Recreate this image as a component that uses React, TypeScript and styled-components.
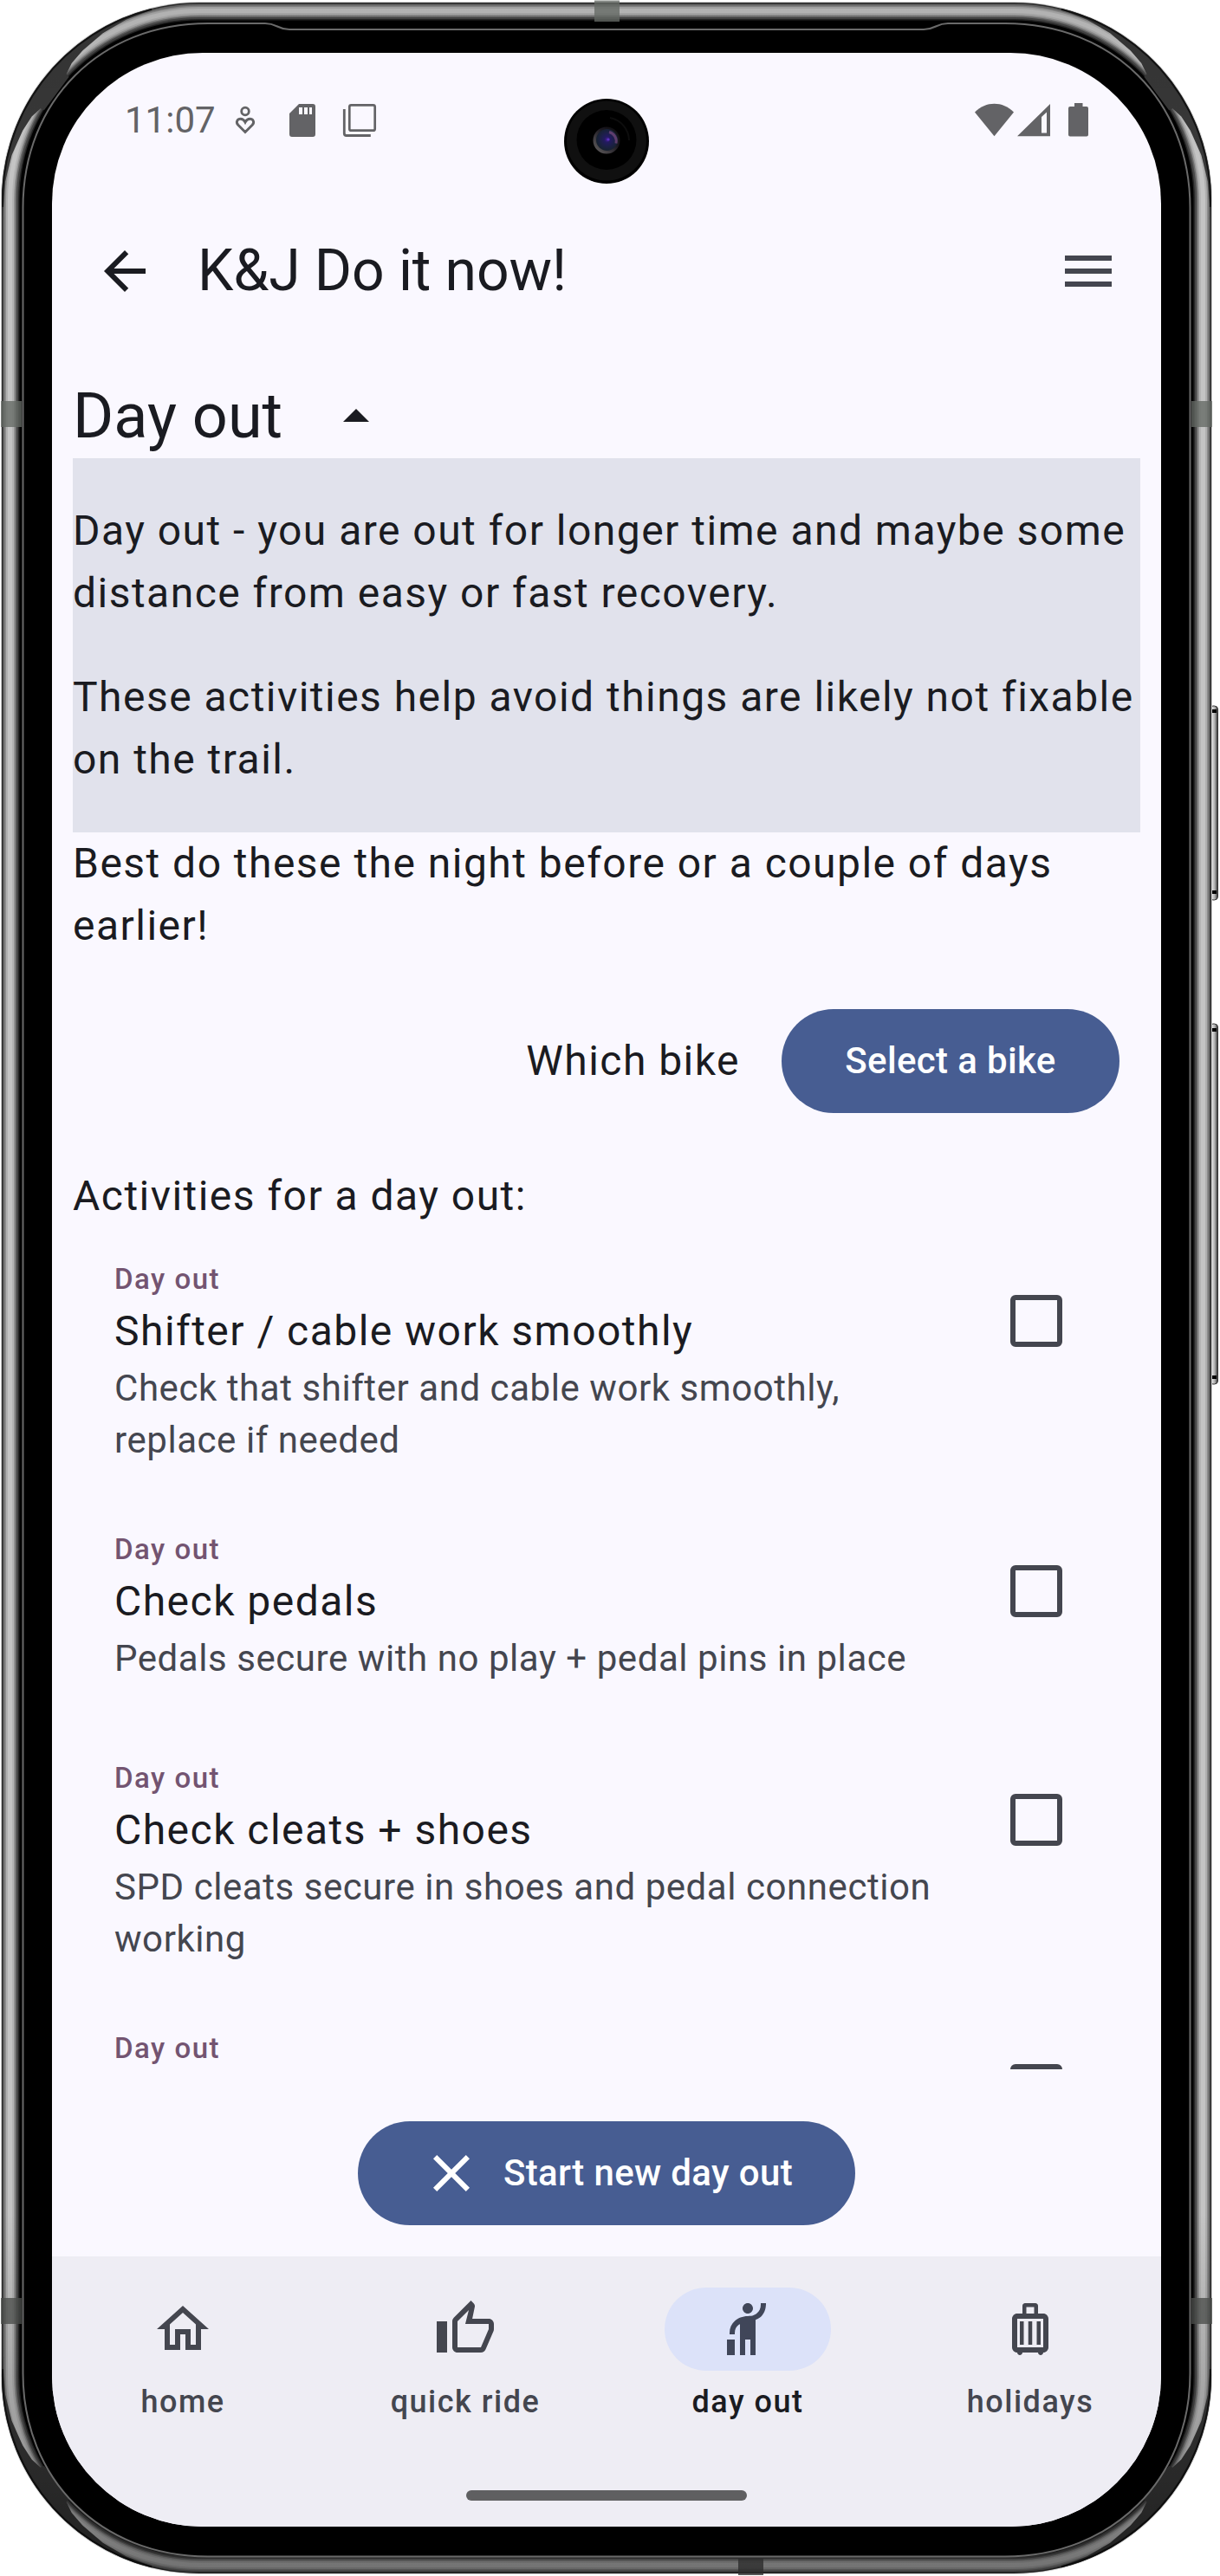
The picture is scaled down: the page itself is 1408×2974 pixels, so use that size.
import React from 'react';
import styled, { createGlobalStyle } from 'styled-components';
import { MdHail, MdOutlineLuggage } from 'react-icons/md';

const color = {
  surface: '#faf8ff',
  container: '#eeedf4',
  variant: '#e1e2ec',
  primary: '#475d92',
  onSurface: '#1a1b21',
  onVariant: '#44464f',
  tertiary: '#735471',
  indicator: '#dce2f9',
  status: '#636366',
};

const GlobalStyle = createGlobalStyle`
  html, body { margin: 0; background: #fff; }
  *, *::before, *::after { box-sizing: border-box; }
  body { font-family: Roboto, "Liberation Sans", sans-serif; color: ${color.onSurface}; }
  p, h1, h2, h3 { margin: 0; font-weight: 400; }
  button { font: inherit; border: 0; background: none; padding: 0; }
`;

const Phone = styled.div`
  position: relative;
  width: 1408px;
  height: 2974px;
  padding: 61px 68px 57px 60px;
  overflow: hidden;
`;

const FrameArt = styled.svg`
  position: absolute;
  inset: 0;
`;

const Camera = styled.svg`
  position: absolute;
  left: 651px;
  top: 114px;
`;

const Screen = styled.main`
  position: relative;
  display: flex;
  flex-direction: column;
  height: 2856px;
  border-radius: 174px;
  overflow: hidden;
  background: ${color.surface};
`;

const StatusBar = styled.header`
  display: flex;
  justify-content: space-between;
  align-items: center;
  flex: none;
  height: 156px;
  padding: 0 84px;
`;

const Clock = styled.span`
  font-size: 42px;
  line-height: 48px;
  color: ${color.status};
`;

const StatusGroup = styled.div`
  display: flex;
  align-items: center;
  color: ${color.status};
  svg { display: block; }
`;

const ClockGroup = styled(StatusGroup)`
  gap: 17px;
`;

const StatusEnd = styled(StatusGroup)`
  margin-right: -4px;
`;

const AppBar = styled.div`
  display: flex;
  align-items: center;
  flex: none;
  height: 192px;
  padding: 0 12px;
`;

const IconButton = styled.button<{ $color: string }>`
  display: grid;
  place-items: center;
  width: 144px;
  height: 144px;
  color: ${(p) => p.$color};
`;

const Title = styled.h1`
  flex: 1;
  padding-left: 12px;
  font-size: 66px;
  line-height: 84px;
  letter-spacing: -0.1px;
`;

const Content = styled.section`
  display: flex;
  flex-direction: column;
  flex: none;
  height: 2196px;
  padding: 24px;
`;

const SectionHead = styled.div`
  display: flex;
  align-items: center;
  gap: 49px;
  height: 96px;
`;

const SectionTitle = styled.h2`
  font-size: 72px;
  line-height: 96px;
`;

const Body = styled.p`
  font-size: 48px;
  line-height: 72px;
  letter-spacing: 1.47px;
`;

const InfoBox = styled.div`
  display: flex;
  flex-direction: column;
  gap: 48px;
  padding: 48px 0;
  background: ${color.variant};
  white-space: nowrap;
`;

const BikeRow = styled.div`
  display: flex;
  align-items: center;
  justify-content: flex-end;
  gap: 48px;
  height: 144px;
  margin: 48px 0;
  padding-right: 24px;
`;

const Pill = styled.button<{ $width: number }>`
  display: flex;
  align-items: center;
  justify-content: center;
  gap: 24px;
  width: ${(p) => p.$width}px;
  height: 120px;
  border-radius: 60px;
  background: ${color.primary};
  color: #fff;
  font-size: 42px;
  font-weight: 500;
  line-height: 60px;
  letter-spacing: 0.35px;
  white-space: nowrap;
`;

const List = styled.ul`
  flex: none;
  height: 972px;
  margin: 0;
  padding: 0;
  overflow: hidden;
  list-style: none;
`;

const Item = styled.li`
  display: flex;
  align-items: flex-start;
  gap: 42px;
  min-height: 264px;
  padding: 36px 48px;
`;

const ItemText = styled.div`
  flex: 1;
`;

const Overline = styled.p`
  font-size: 33px;
  font-weight: 500;
  line-height: 48px;
  letter-spacing: 1.5px;
  color: ${color.tertiary};
`;

const Support = styled.p`
  font-size: 42px;
  line-height: 60px;
  letter-spacing: 0.56px;
  color: ${color.onVariant};
`;

const CheckArea = styled.div`
  display: grid;
  place-items: center;
  width: 144px;
  height: 144px;
`;

const Check = styled.span`
  width: 60px;
  height: 60px;
  border: 6px solid ${color.onVariant};
  border-radius: 6px;
`;

const ActionRow = styled.div`
  display: flex;
  justify-content: center;
  align-items: center;
  height: 144px;
  margin-top: 48px;
`;

const NavBar = styled.nav`
  display: flex;
  flex-direction: column;
  align-items: center;
  flex: 1;
  background: ${color.container};
`;

const NavItems = styled.div`
  display: flex;
  gap: 24px;
  width: 100%;
  height: 240px;
  padding-top: 36px;
`;

const NavItem = styled.div<{ $active?: boolean }>`
  display: flex;
  flex: 1;
  flex-direction: column;
  align-items: center;
  gap: 12px;
  color: ${(p) => (p.$active ? color.onSurface : color.onVariant)};
  font-size: 36px;
  font-weight: 500;
  line-height: 48px;
  letter-spacing: 1.5px;
`;

const Indicator = styled.div<{ $active?: boolean }>`
  display: grid;
  place-items: center;
  width: 192px;
  height: 96px;
  border-radius: 48px;
  background: ${(p) => (p.$active ? color.indicator : 'transparent')};
  color: ${(p) => (p.$active ? '#404659' : color.onVariant)};
`;

const Handle = styled.div`
  width: 324px;
  height: 12px;
  margin-top: 30px;
  border-radius: 6px;
  background: #5f5f61;
`;

const Icon = ({ d }: { d: string }) => (
  <svg width="72" height="72" viewBox="0 0 24 24" fill="currentColor">
    <path d={d} />
  </svg>
);

const paths = {
  back: 'M20 11H7.83l5.59-5.59L12 4l-8 8 8 8 1.41-1.41L7.83 13H20v-2z',
  menu: 'M3 18h18v-2H3v2zm0-5h18v-2H3v2zm0-7v2h18V6H3z',
  dropUp: 'M7 14l5-5 5 5z',
  close: 'M19 6.41L17.59 5 12 10.59 6.41 5 5 6.41 10.59 12 5 17.59 6.41 19 12 13.41 17.59 19 19 17.59 13.41 12z',
  home: 'M12 5.69l5 4.5V18h-2v-6H9v6H7v-7.81l5-4.5M12 3L2 12h3v8h6v-6h2v6h6v-8h3L12 3z',
  thumb:
    'M9 21h9c.83 0 1.54-.5 1.84-1.22l3.02-7.05c.09-.23.14-.47.14-.73v-2c0-1.1-.9-2-2-2h-6.31l.95-4.57.03-.32c0-.41-.17-.79-.44-1.06L14.17 1 7.58 7.59C7.22 7.95 7 8.45 7 9v10c0 1.1.9 2 2 2zM9 9l4.34-4.34L12 10h9v2l-3 7H9V9zM1 9h4v12H1z',
};

const activities = [
  { title: 'Shifter / cable work smoothly', text: 'Check that shifter and cable work smoothly, replace if needed' },
  { title: 'Check pedals', text: 'Pedals secure with no play + pedal pins in place' },
  { title: 'Check cleats + shoes', text: 'SPD cleats secure in shoes and pedal connection working' },
  { title: '', text: '' },
];

/* Metal rim, from the outer edge inwards: [inset, shade]. */
const rim: [number, string][] = [
  [0, '#2b2b2b'],
  [1.5, '#6c6c6c'],
  [3.5, '#8f8f8f'],
  [5, '#b0b0b0'],
  [7, '#c4c4c4'],
  [12, '#b4b4b4'],
  [14, '#969696'],
  [15.5, '#6c6c6c'],
  [17, '#484848'],
  [19, '#262626'],
  [20.5, '#000'],
];

/* A point on the top-left corner, at radius r and angle a (degrees, from straight up). */
const polar = (r: number, a: number) => {
  const t = (a * Math.PI) / 180;
  return `${(230 - r * Math.sin(t)).toFixed(1)} ${(231 - r * Math.cos(t)).toFixed(1)}`;
};

/* Inner limit of the corner's shadow: the highlights taper to a point at 46.5 and 60 degrees. */
const half: [number, number][] = [
  [226.5, 14],
  [225, 22],
  [222.5, 30],
  [219, 38],
  [216, 43],
  [211.5, 46.5],
  [207, 46.6],
];
const shadowEdge = [...half, ...half.map(([r, a]): [number, number] => [r, 106.5 - a]).reverse()];
const cornerShade =
  `M${polar(227, 10)} A227 227 0 0 0 ${polar(227, 96)} L` +
  [...shadowEdge].reverse().map(([r, a]) => polar(r, a)).join(' L') +
  ' Z';

const Corner = ({ transform }: { transform?: string }) => (
  <g transform={transform} fill="none">
    <path d={cornerShade} fill="#383838" />
    <path d={`M${polar(227, 14)} A227 227 0 0 0 ${polar(227, 92)}`} stroke="#141414" strokeWidth="2" />
  </g>
);

const Frame = () => (
  <FrameArt width="1408" height="2974" viewBox="0 0 1408 2974">
    <defs>
      <linearGradient id="fall" x1="0" y1="0" x2="0" y2="1">
        <stop offset="0" stopColor="#000" stopOpacity="0.1" />
        <stop offset="0.06" stopColor="#000" stopOpacity="0" />
        <stop offset="0.86" stopColor="#000" stopOpacity="0" />
        <stop offset="0.94" stopColor="#000" stopOpacity="0.18" />
        <stop offset="1" stopColor="#000" stopOpacity="0.42" />
      </linearGradient>
      <linearGradient id="key" x1="0" y1="0" x2="1" y2="0">
        <stop offset="0" stopColor="#555" />
        <stop offset="0.35" stopColor="#d8d8d8" />
        <stop offset="0.65" stopColor="#aaa" />
        <stop offset="1" stopColor="#2a2a2a" />
      </linearGradient>
    </defs>
    <rect x="1396" y="815" width="9.5" height="224" rx="4" fill="url(#key)" stroke="#333" strokeWidth="1" />
    <rect x="1396" y="1182" width="9.5" height="416" rx="4" fill="url(#key)" stroke="#333" strokeWidth="1" />
    <path d="M1399 821h5M1399 1030h5M1399 1189h5M1399 1590h5" stroke="#000" strokeWidth="4" />
    <rect x="1" y="2" width="1398" height="2970" rx="229" fill="#ccc" />
    {rim.map(([d, fill]) => (
      <rect key={d} x={2 + d} y={3 + d} width={1396 - 2 * d} height={2968 - 2 * d} rx={228 - d} fill={fill} />
    ))}
    <Corner />
    <Corner transform="translate(1400 0) scale(-1 1)" />
    <Corner transform="translate(0 2974) scale(1 -1)" />
    <Corner transform="translate(1400 2974) scale(-1 -1)" />
    <rect x="2" y="3" width="1396" height="2968" rx="228" fill="url(#fall)" />
    <g fill="#646964" opacity="0.78">
      <rect x="686" y="0.500" width="29" height="24.500" />
      <rect x="1" y="463" width="24" height="30" />
      <rect x="1375" y="463" width="24" height="30" />
      <rect x="1" y="2653" width="24" height="30" fill="#4a4d4a" />
      <rect x="1375" y="2653" width="24" height="30" fill="#4a4d4a" />
      <rect x="852" y="2953" width="29" height="20" fill="#2c2c2c" />
    </g>
    <path
      d="M26.5 240 C26.5 116 116 27 240 27 H306 C320 27 320 34 334 34 H1066 C1080 34 1080 27 1094 27 H1160 C1284 27 1373.5 116 1373.5 240 V2740 C1373.5 2862 1284 2951.5 1160 2951.5 H240 C116 2951.5 26.5 2862 26.5 2740 Z"
      fill="#000"
      stroke="#6a6a6a"
      strokeWidth="2"
    />
  </FrameArt>
);

const Lens = () => (
  <Camera width="98" height="98" viewBox="0 0 98 98">
    <defs>
      <radialGradient id="glass" cx="0.52" cy="0.48" r="0.55">
        <stop offset="0" stopColor="#4a1f96" />
        <stop offset="0.25" stopColor="#221a60" />
        <stop offset="0.6" stopColor="#1c2046" />
        <stop offset="1" stopColor="#15222c" />
      </radialGradient>
      <linearGradient id="lensRing" x1="0" y1="1" x2="1" y2="0">
        <stop offset="0" stopColor="#6a6666" />
        <stop offset="0.6" stopColor="#1b1820" />
        <stop offset="1" stopColor="#0a0a0a" />
      </linearGradient>
    </defs>
    <circle cx="49" cy="49" r="49" fill="#000" />
    <circle cx="49" cy="48.500" r="46" fill="#101010" />
    <circle cx="49" cy="47.500" r="34.500" fill="#000" />
    <path d="M53 22a27 27 0 0 1 22 26" stroke="#0d0d0d" strokeWidth="2" fill="none" />
    <circle cx="49" cy="48" r="15.500" fill="url(#lensRing)" />
    <circle cx="49.500" cy="47.500" r="12.500" fill="url(#glass)" />
    <path d="M52 38.500a11 11 0 0 1 8 13" stroke="#7a4a80" strokeWidth="3" fill="none" opacity="0.7" />
    <circle cx="51" cy="47" r="1.600" fill="#5a32c0" />
  </Camera>
);

const StatusLeftIcons = () => (
  <svg width="170" height="48" viewBox="266 115 170 48" fill="none" stroke="currentColor">
    <circle cx="283" cy="128.500" r="4.300" strokeWidth="2.800" />
    <path
      d="M283 152.500L274.800 144.300C271.500 140.500 274.500 137.200 277.500 137.200C280.300 137.200 282 139 283 141C284 139 285.700 137.200 288.500 137.200C291.500 137.200 294.500 140.500 291.200 144.300Z"
      strokeWidth="2.900"
    />
    <path
      d="M345 120h16a3 3 0 0 1 3 3v32a3 3 0 0 1-3 3h-24a3 3 0 0 1-3-3v-24zM345 124v8h4v-8zM351 124v8h4v-8zM357 124v8h3v-8z"
      fill="currentColor"
      fillRule="evenodd"
      stroke="none"
    />
    <rect x="403.300" y="121.300" width="29.400" height="29.400" rx="2" strokeWidth="2.700" />
    <path d="M397.300 126v28a2.500 2.500 0 0 0 2.500 2.500h28" strokeWidth="2.800" />
  </svg>
);

const StatusRightIcons = () => (
  <svg width="140" height="48" viewBox="1120 115 140 48" fill="currentColor">
    <path d="M1125 129.500C1138 116.500 1157 116.500 1170 129.500L1147.500 157.200Z" />
    <path d="M1174 157.200L1212 120V157.200ZM1202 135V153.500H1208V129.500Z" fillRule="evenodd" />
    <path d="M1240 119h9.500v4h4.500a2 2 0 0 1 2 2v30.500a2 2 0 0 1-2 2h-19a2 2 0 0 1-2-2V125a2 2 0 0 1 2-2h5z" />
  </svg>
);

export default function App() {
  return (
    <>
      <GlobalStyle />
      <Phone>
        <Frame />
        <Screen>
          <StatusBar>
            <ClockGroup>
              <Clock>11:07</Clock>
              <StatusLeftIcons />
            </ClockGroup>
            <StatusEnd>
              <StatusRightIcons />
            </StatusEnd>
          </StatusBar>
          <AppBar>
            <IconButton $color={color.onSurface} aria-label="Back">
              <Icon d={paths.back} />
            </IconButton>
            <Title>K&amp;J Do it now!</Title>
            <IconButton $color={color.onVariant} aria-label="Menu">
              <Icon d={paths.menu} />
            </IconButton>
          </AppBar>
          <Content>
            <SectionHead>
              <SectionTitle>Day out</SectionTitle>
              <Icon d={paths.dropUp} />
            </SectionHead>
            <InfoBox>
              <Body>
                Day out - you are out for longer time and maybe some
                <br />
                distance from easy or fast recovery.
              </Body>
              <Body>
                These activities help avoid things are likely not fixable
                <br />
                on the trail.
              </Body>
            </InfoBox>
            <Body>
              Best do these the night before or a couple of days
              <br />
              earlier!
            </Body>
            <BikeRow>
              <Body>Which bike</Body>
              <Pill $width={390}>Select a bike</Pill>
            </BikeRow>
            <Body>Activities for a day out:</Body>
            <List>
              {activities.map((a, i) => (
                <Item key={i}>
                  <ItemText>
                    <Overline>Day out</Overline>
                    <Body>{a.title}</Body>
                    <Support>{a.text}</Support>
                  </ItemText>
                  <CheckArea>
                    <Check />
                  </CheckArea>
                </Item>
              ))}
            </List>
            <ActionRow>
              <Pill $width={574}>
                <Icon d={paths.close} />
                Start new day out
              </Pill>
            </ActionRow>
          </Content>
          <NavBar>
            <NavItems>
              <NavItem>
                <Indicator>
                  <Icon d={paths.home} />
                </Indicator>
                home
              </NavItem>
              <NavItem>
                <Indicator>
                  <Icon d={paths.thumb} />
                </Indicator>
                quick ride
              </NavItem>
              <NavItem $active>
                <Indicator $active>
                  <MdHail size={72} />
                </Indicator>
                day out
              </NavItem>
              <NavItem>
                <Indicator>
                  <MdOutlineLuggage size={72} />
                </Indicator>
                holidays
              </NavItem>
            </NavItems>
            <Handle />
          </NavBar>
        </Screen>
        <Lens />
      </Phone>
    </>
  );
}
